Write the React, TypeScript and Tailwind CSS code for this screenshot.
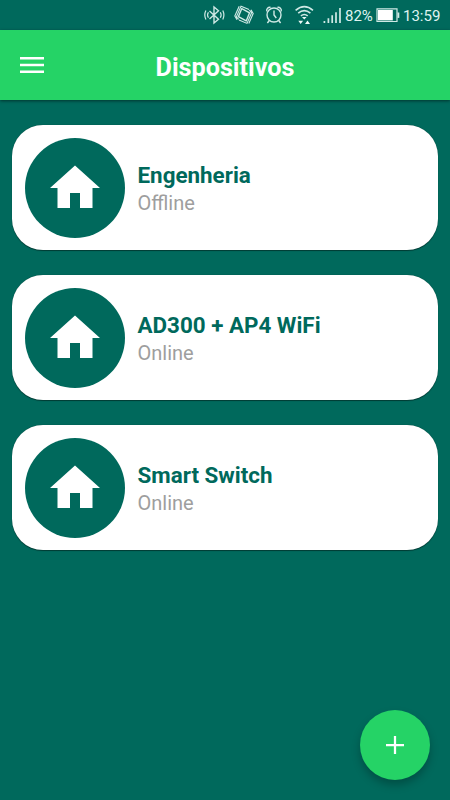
import React from "react";

type Device = { name: string; status: string };

const devices: Device[] = [
  { name: "Engenheria", status: "Offline" },
  { name: "AD300 + AP4 WiFi", status: "Online" },
  { name: "Smart Switch", status: "Online" },
];

function StatusIcons() {
  return (
    <svg width="202" height="30" viewBox="200 0 202 30" fill="none" stroke="#cfe9e5" strokeWidth="1.4" className="absolute left-[200px] top-0">
      <path d="M209.5 11 L218.5 19.2 L214 23 V7 L218.5 10.8 L209.5 19" />
      <path d="M208.4 12.3 q-1.7 2.7 0 5.4 M205.9 10.5 q-2.2 4.5 0 9 M220.3 12.3 q1.7 2.7 0 5.4 M222.8 10.5 q2.2 4.5 0 9" strokeWidth="1.2" />
      <path d="M241.8 8.6 L249.6 12.8 L246.2 20.9 L238.4 16.7 Z" strokeWidth="1.4" strokeLinejoin="round" />
      <path d="M249 9.6 L241 6.2 L236.4 16.8 L238.6 19.4 M239.2 6.2 L234.8 16 L237 19.8 M239 20 L247 23.4 L251.6 12.8 L249.4 10.2 M248.8 23.4 L253.2 13.6 L251 9.8" strokeWidth="1.1" />
      <circle cx="274" cy="15" r="7" />
      <path d="M274 10.5 V15 L276.3 18 M266.8 11.4 A3.2 3.2 0 0 1 270.6 7.4 M277.4 7.4 A3.2 3.2 0 0 1 281.2 11.4 M269.3 20.5 L267.4 23 M278.7 20.5 L280.6 23" />
      <path d="M295.6 10.3 q8.7 -7.2 17.4 0 M298.2 13.2 q6.1 -5 12.2 0 M300.9 15.9 q3.4 -2.8 6.8 0" strokeWidth="1.6" />
      <path d="M302 17 h4.6 l-2.3 2.4z M298.3 20.7 h4.8 l-2.4 3.4z M305 24.1 h5 l-2.5 -3.6z" fill="#eefaf8" stroke="none" />
      <path d="M324.4 21 V23 M328.4 18.3 V23 M332.2 15.3 V23 M336 12.2 V23 M340 8 V23" strokeWidth="1.7" />
      <path d="M377 8.8 h20 v12.7 h-20 z" strokeWidth="1.2" />
      <path d="M378 10 h14.8 v10.4 h-14.8z" fill="white" stroke="none" />
      <path d="M397.5 12.5 h1.8 v5.4 h-1.8z" fill="#cfe9e5" stroke="none" />
    </svg>
  );
}

export default function App() {
  return (
    <div className="relative flex h-[800px] w-[450px] flex-col overflow-hidden bg-[#00695c] font-[Roboto,sans-serif]">
      <div className="relative h-[30px] shrink-0 text-[15px] leading-[30px] text-[#dff3f0]">
        <StatusIcons />
        <span className="absolute left-[345px] top-[1px]">82%</span>
        <span className="absolute left-[403px] top-[1px]">13:59</span>
      </div>
      <header className="z-10 grid h-[70px] shrink-0 grid-cols-[1fr_auto_1fr] items-center bg-[#25d366] px-4 text-white shadow-[0_1px_3px_rgba(0,0,0,0.5)]">
        <svg width="32" height="32" viewBox="0 0 24 24" fill="currentColor">
          <path d="M3 18h18v-1.8H3v1.8zm0-5.1h18v-1.8H3v1.8zm0-6.9v1.8h18V6H3z" />
        </svg>
        <h1 className="pt-[5px] text-[25.2px] font-bold leading-8">Dispositivos</h1>
      </header>
      <main className="flex flex-col gap-[25px] px-3 pt-[25px]">
        {devices.map((d) => (
          <section key={d.name} className="flex h-[125px] items-center gap-[12.5px] rounded-[31px] bg-white px-[13px] shadow-[0_0.5px_1px_rgba(0,0,0,0.45)]">
            <div className="flex size-[100px] items-center justify-center rounded-full bg-[#00695c]">
              <svg width="60" height="60" viewBox="0 0 24 24" fill="white">
                <path d="M10 20v-6h4v6h5v-8h3L12 3 2 12h3v8z" />
              </svg>
            </div>
            <div className="pt-[3px]">
              <h2 className="text-[22.4px] font-bold leading-[29px] text-[#00695c]">{d.name}</h2>
              <p className="text-[20px] leading-[27px] text-[#9e9e9e]">{d.status}</p>
            </div>
          </section>
        ))}
      </main>
      <button className="absolute bottom-5 right-5 flex size-[70px] items-center justify-center rounded-full bg-[#25d366] shadow-[0_5px_9px_rgba(0,0,0,0.25)]">
        <svg width="30" height="30" viewBox="0 0 24 24" fill="white">
          <path d="M19.2 12.9h-6.3v6.3h-1.8v-6.3H4.8v-1.8h6.3V4.8h1.8v6.3h6.3v1.8z" />
        </svg>
      </button>
    </div>
  );
}
